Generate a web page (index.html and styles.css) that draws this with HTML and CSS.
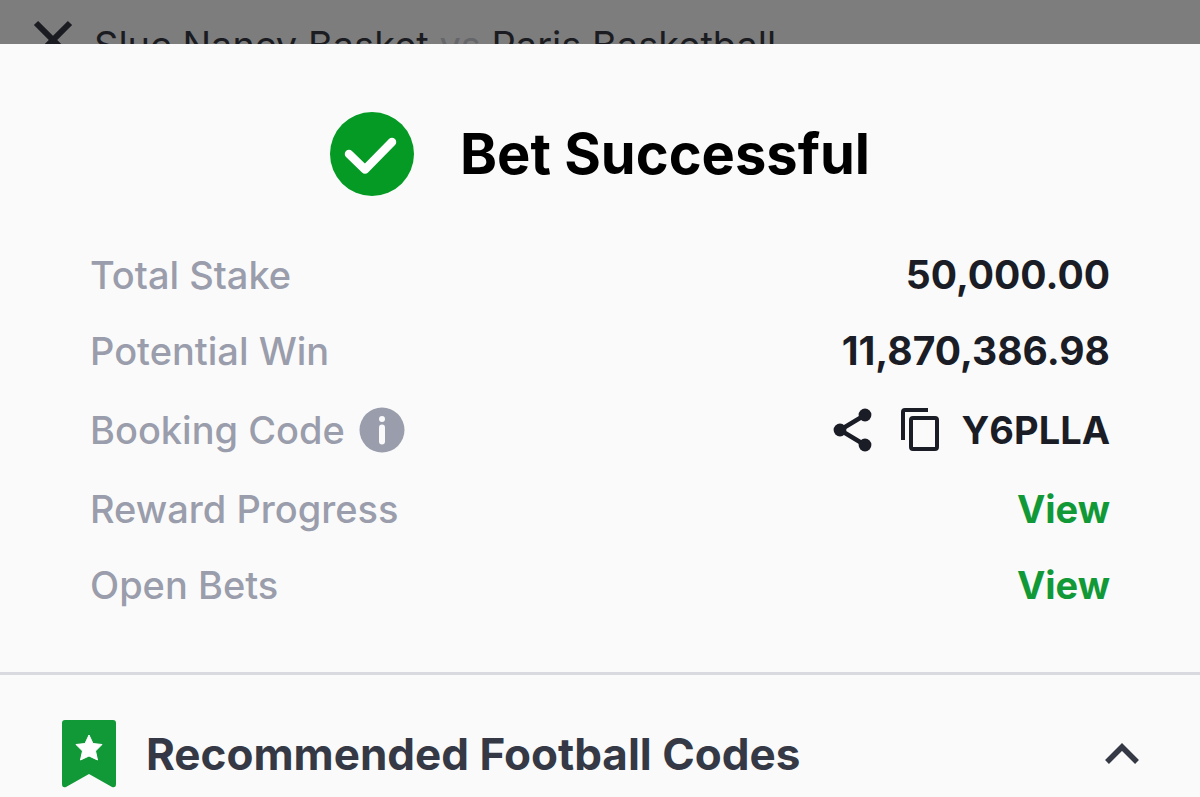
FILE: index.html
```html
<!DOCTYPE html>
<html lang="en">
<head>
<meta charset="utf-8">
<meta name="viewport" content="width=device-width, initial-scale=1">
<title>Bet Successful</title>
<link rel="stylesheet" href="styles.css">
</head>
<body>
<header class="match-bar">
  <button class="icon-button" type="button" aria-label="Close">
    <svg width="42" height="42" viewBox="0 0 42 42" fill="none" stroke="#1b1c21" stroke-width="6"><path d="M4 4 38 38M38 4 4 38"/></svg>
  </button>
  <p class="match-title">Sluc Nancy Basket <span class="versus">vs</span> Paris Basketball</p>
</header>
<main class="sheet">
  <section class="receipt">
    <div class="status">
      <svg width="84" height="84" viewBox="0 0 84 84"><circle cx="42" cy="42" r="42" fill="#049a24"/><path d="M19 42 35 57.500 62 30" fill="none" stroke="#fff" stroke-width="8.500" stroke-linecap="round" stroke-linejoin="round"/></svg>
      <h1 class="status-title">Bet Successful</h1>
    </div>
    <dl class="details">
      <div class="row"><dt class="label">Total Stake</dt><dd class="value amount">50,000.00</dd></div>
      <div class="row"><dt class="label">Potential Win</dt><dd class="value amount">11,870,386.98</dd></div>
      <div class="row row-code">
        <dt class="label">Booking Code
          <button class="icon-button" type="button" aria-label="About booking codes">
            <svg width="46" height="46" viewBox="0 0 46 46"><circle cx="23" cy="23" r="22.500" fill="#9a9dab"/><circle cx="23" cy="12" r="3" fill="#fafafa"/><path d="M23 20.500V34.500" stroke="#fafafa" stroke-width="6" stroke-linecap="round"/></svg>
          </button>
        </dt>
        <dd class="value code">
          <button class="icon-button" type="button" aria-label="Share">
            <svg width="40" height="44" viewBox="0 0 40 44" fill="#1b1d26"><path d="M33 7 8 22 33 37" fill="none" stroke="#1b1d26" stroke-width="4.500"/><circle cx="33" cy="7" r="6.400"/><circle cx="8" cy="22" r="6.400"/><circle cx="33" cy="37" r="6.400"/></svg>
          </button>
          <button class="icon-button copy" type="button" aria-label="Copy">
            <svg width="40" height="44" viewBox="0 0 40 44" fill="none" stroke="#1b1d26" stroke-width="4"><path d="M28 2H5Q3 2 3 4V32"/><rect x="11" y="10" width="26" height="31" rx="2"/></svg>
          </button>
          Y6PLLA
        </dd>
      </div>
      <div class="row"><dt class="label">Reward Progress</dt><dd class="value"><a class="view" href="#rewards">View</a></dd></div>
      <div class="row"><dt class="label">Open Bets</dt><dd class="value"><a class="view" href="#bets">View</a></dd></div>
    </dl>
  </section>
  <section class="recommended">
    <svg width="54" height="68" viewBox="0 0 54 68"><path d="M3 0H51Q54 0 54 3V64Q54 68 50 67L27 54 4 67Q0 68 0 64V3Q0 0 3 0Z" fill="#119937"/><path d="m27 15 4 8.500 9 1-6.500 6.500 2 9-8.500-4-8.500 4 2-9-6.500-6.500 9-1Z" fill="#fff" stroke="#fff" stroke-width="1" stroke-linejoin="round"/></svg>
    <h2 class="recommended-title">Recommended Football Codes</h2>
    <button class="icon-button" type="button" aria-label="Collapse">
      <svg width="34" height="22" viewBox="0 0 34 22" fill="none" stroke="#353945" stroke-width="5.500"><path d="M2 19 17 4 32 19"/></svg>
    </button>
  </section>
</main>
</body>
</html>
```
FILE: styles.css
```css
* {
  box-sizing: border-box;
}

body {
  margin: 0;
  height: 100vh;
  overflow: hidden;
  display: flex;
  flex-direction: column;
  background: #7d7d7d;
  font-family: Inter, "Liberation Sans", sans-serif;
}

h1, h2, p, dl, dd {
  margin: 0;
}

svg {
  display: block;
  flex: none;
}

.icon-button {
  flex: none;
  padding: 0;
  border: 0;
  background: none;
}

.match-bar {
  flex: none;
  display: flex;
  align-items: flex-start;
  gap: 20px;
  height: 44px;
  padding: 19px 32px 0;
  overflow: hidden;
}

.match-title {
  font-size: 38px;
  line-height: 52px;
  color: #1b1c21;
  white-space: nowrap;
}

.versus {
  color: #65666a;
}

.sheet {
  flex: 1 0 auto;
  background: #fafafa;
}

.receipt {
  padding: 68px 90px 63px;
  border-bottom: 3px solid #d9d9e0;
}

.status {
  display: flex;
  justify-content: center;
  align-items: center;
  gap: 46px;
}

.status-title {
  font-size: 56px;
  line-height: 84px;
  font-weight: 700;
  color: #000;
}

.details {
  display: flex;
  flex-direction: column;
  gap: 28px;
  margin-top: 55px;
}

.row {
  display: flex;
  justify-content: space-between;
  align-items: center;
  min-height: 48px;
  font-size: 38px;
  line-height: 48px;
}

.row-code {
  min-height: 54px;
}

.label {
  display: flex;
  align-items: center;
  gap: 14px;
  font-weight: 500;
  color: #9a9dab;
}

.value {
  font-weight: 700;
  color: #1b1d26;
}

.amount {
  font-size: 39px;
}

.code {
  display: flex;
  align-items: center;
  gap: 22px;
}

.copy {
  margin-left: 6px;
}

.view {
  color: #119937;
  text-decoration: none;
}

.recommended {
  display: flex;
  align-items: center;
  gap: 30px;
  padding: 45px 61px 0 62px;
}

.recommended-title {
  flex: 1;
  font-size: 44px;
  line-height: 68px;
  font-weight: 700;
  color: #353945;
}
```
